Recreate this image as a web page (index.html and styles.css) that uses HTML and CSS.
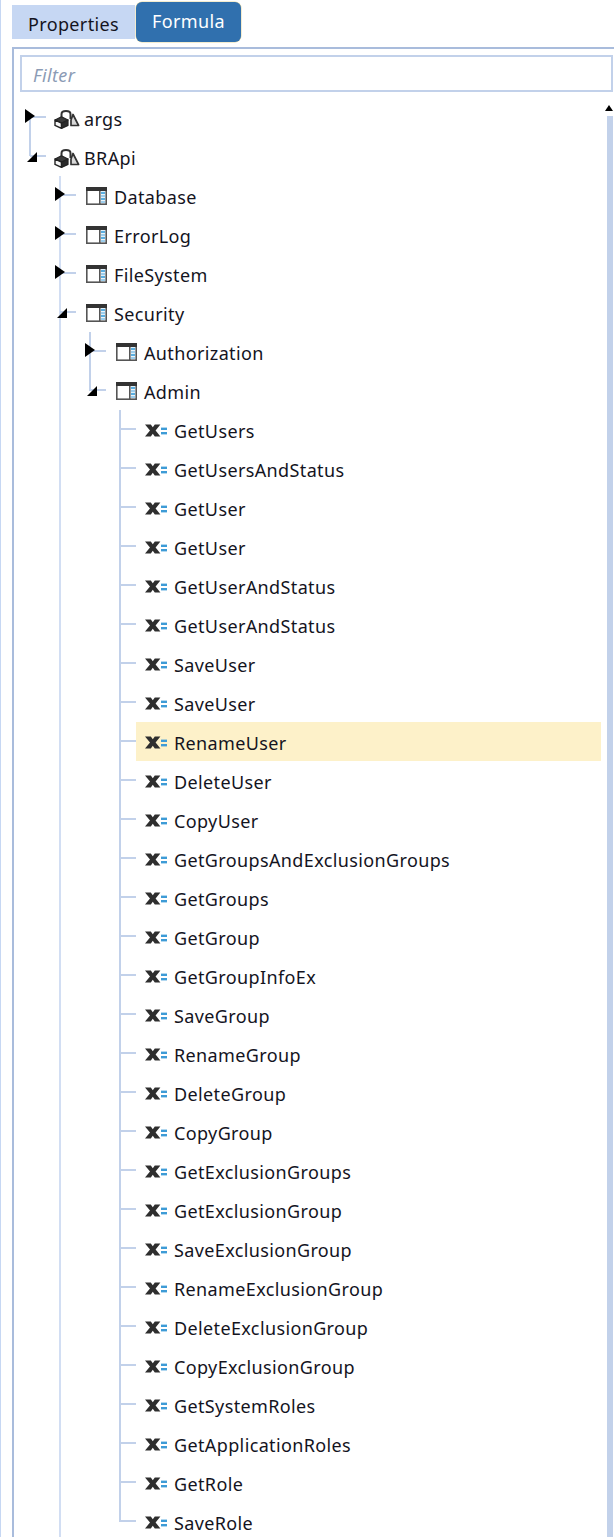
FILE: index.html
```html
<!DOCTYPE html>
<html lang="en">
<head>
<meta charset="utf-8">
<title>Formula</title>
<link rel="stylesheet" href="styles.css">
</head>
<body>
<svg class="defs" width="0" height="0" aria-hidden="true">
  <symbol id="ns" viewBox="0 0 26 19">
    <path d="M7.5 8V4.2C7.5 1.9 9.6 1 12 1S16.5 1.9 16.5 4.2V9" fill="none" stroke="#333" stroke-width="2"/>
    <path d="M19 4.5L24.6 15.5H17V10Z" fill="#d8d8d8" stroke="#333" stroke-width="1.7" stroke-linejoin="round"/>
    <path d="M1 10L7.5 6.8L14 10L7.5 13.2Z" fill="#3a3a3a" stroke="#222" stroke-width="1.2" stroke-linejoin="round"/>
    <path d="M1 10V15.4L7.5 18.4V13.2Z" fill="#f6f6f6" stroke="#222" stroke-width="1.4" stroke-linejoin="round"/>
    <path d="M14 10V15.4L7.5 18.4V13.2Z" fill="#2a2a2a" stroke="#222" stroke-width="1.2" stroke-linejoin="round"/>
  </symbol>
  <symbol id="cls" viewBox="0 0 21 18">
    <rect x="0.8" y="0.8" width="19.4" height="16.4" fill="#fff" stroke="#555" stroke-width="1.6"/>
    <rect x="0" y="0" width="21" height="4" fill="#333"/>
    <rect x="13" y="4" width="1.6" height="13" fill="#555"/>
    <rect x="15" y="4.8" width="4" height="2.2" fill="#5aaee0"/>
    <rect x="15" y="7.8" width="4" height="2.2" fill="#9ccdec"/>
    <rect x="15" y="10.8" width="4" height="2.2" fill="#5aaee0"/>
    <rect x="15" y="13.8" width="4" height="2.2" fill="#9ccdec"/>
  </symbol>
  <symbol id="fn" viewBox="0 0 22 13">
    <path d="M0 0.5H5.8L7.8 3.2L9.8 0.5H15.4L10.6 6.5L15.4 12.5H9.8L7.8 9.8L5.8 12.5H0L5 6.5Z" fill="#2e2e2e"/>
    <rect x="16" y="3.6" width="6" height="2.4" fill="#3d9bd6"/>
    <rect x="16" y="8" width="6" height="2.4" fill="#3d9bd6"/>
  </symbol>
</svg>
<div class="app">
  <div class="tabs">
    <div class="tab">Properties</div>
    <div class="tab tab-active">Formula</div>
  </div>
  <div class="panel">
    <div class="filter">Filter</div>
    <div class="body">
      <div class="tree">
        <ul class="nodes root">
          <li class="node"><div class="row"><span class="twisty closed"></span><span class="item"><svg class="ico ico-ns"><use href="#ns"/></svg>args</span></div></li>
          <li class="node"><div class="row"><span class="twisty open"></span><span class="item"><svg class="ico ico-ns"><use href="#ns"/></svg>BRApi</span></div>
            <ul class="nodes api">
              <li class="node"><div class="row"><span class="twisty closed"></span><span class="item"><svg class="ico ico-cls"><use href="#cls"/></svg>Database</span></div></li>
              <li class="node"><div class="row"><span class="twisty closed"></span><span class="item"><svg class="ico ico-cls"><use href="#cls"/></svg>ErrorLog</span></div></li>
              <li class="node"><div class="row"><span class="twisty closed"></span><span class="item"><svg class="ico ico-cls"><use href="#cls"/></svg>FileSystem</span></div></li>
              <li class="node"><div class="row"><span class="twisty open"></span><span class="item"><svg class="ico ico-cls"><use href="#cls"/></svg>Security</span></div>
                <ul class="nodes sec">
                  <li class="node"><div class="row"><span class="twisty closed"></span><span class="item"><svg class="ico ico-cls"><use href="#cls"/></svg>Authorization</span></div></li>
                  <li class="node"><div class="row"><span class="twisty open"></span><span class="item"><svg class="ico ico-cls"><use href="#cls"/></svg>Admin</span></div>
                    <ul class="nodes admin">
                      <li class="node"><div class="row"><span class="leaf"></span><span class="item"><svg class="ico ico-fn"><use href="#fn"/></svg>GetUsers</span></div></li>
                      <li class="node"><div class="row"><span class="leaf"></span><span class="item"><svg class="ico ico-fn"><use href="#fn"/></svg>GetUsersAndStatus</span></div></li>
                      <li class="node"><div class="row"><span class="leaf"></span><span class="item"><svg class="ico ico-fn"><use href="#fn"/></svg>GetUser</span></div></li>
                      <li class="node"><div class="row"><span class="leaf"></span><span class="item"><svg class="ico ico-fn"><use href="#fn"/></svg>GetUser</span></div></li>
                      <li class="node"><div class="row"><span class="leaf"></span><span class="item"><svg class="ico ico-fn"><use href="#fn"/></svg>GetUserAndStatus</span></div></li>
                      <li class="node"><div class="row"><span class="leaf"></span><span class="item"><svg class="ico ico-fn"><use href="#fn"/></svg>GetUserAndStatus</span></div></li>
                      <li class="node"><div class="row"><span class="leaf"></span><span class="item"><svg class="ico ico-fn"><use href="#fn"/></svg>SaveUser</span></div></li>
                      <li class="node"><div class="row"><span class="leaf"></span><span class="item"><svg class="ico ico-fn"><use href="#fn"/></svg>SaveUser</span></div></li>
                      <li class="node"><div class="row"><span class="leaf"></span><span class="item selected"><svg class="ico ico-fn"><use href="#fn"/></svg>RenameUser</span></div></li>
                      <li class="node"><div class="row"><span class="leaf"></span><span class="item"><svg class="ico ico-fn"><use href="#fn"/></svg>DeleteUser</span></div></li>
                      <li class="node"><div class="row"><span class="leaf"></span><span class="item"><svg class="ico ico-fn"><use href="#fn"/></svg>CopyUser</span></div></li>
                      <li class="node"><div class="row"><span class="leaf"></span><span class="item"><svg class="ico ico-fn"><use href="#fn"/></svg>GetGroupsAndExclusionGroups</span></div></li>
                      <li class="node"><div class="row"><span class="leaf"></span><span class="item"><svg class="ico ico-fn"><use href="#fn"/></svg>GetGroups</span></div></li>
                      <li class="node"><div class="row"><span class="leaf"></span><span class="item"><svg class="ico ico-fn"><use href="#fn"/></svg>GetGroup</span></div></li>
                      <li class="node"><div class="row"><span class="leaf"></span><span class="item"><svg class="ico ico-fn"><use href="#fn"/></svg>GetGroupInfoEx</span></div></li>
                      <li class="node"><div class="row"><span class="leaf"></span><span class="item"><svg class="ico ico-fn"><use href="#fn"/></svg>SaveGroup</span></div></li>
                      <li class="node"><div class="row"><span class="leaf"></span><span class="item"><svg class="ico ico-fn"><use href="#fn"/></svg>RenameGroup</span></div></li>
                      <li class="node"><div class="row"><span class="leaf"></span><span class="item"><svg class="ico ico-fn"><use href="#fn"/></svg>DeleteGroup</span></div></li>
                      <li class="node"><div class="row"><span class="leaf"></span><span class="item"><svg class="ico ico-fn"><use href="#fn"/></svg>CopyGroup</span></div></li>
                      <li class="node"><div class="row"><span class="leaf"></span><span class="item"><svg class="ico ico-fn"><use href="#fn"/></svg>GetExclusionGroups</span></div></li>
                      <li class="node"><div class="row"><span class="leaf"></span><span class="item"><svg class="ico ico-fn"><use href="#fn"/></svg>GetExclusionGroup</span></div></li>
                      <li class="node"><div class="row"><span class="leaf"></span><span class="item"><svg class="ico ico-fn"><use href="#fn"/></svg>SaveExclusionGroup</span></div></li>
                      <li class="node"><div class="row"><span class="leaf"></span><span class="item"><svg class="ico ico-fn"><use href="#fn"/></svg>RenameExclusionGroup</span></div></li>
                      <li class="node"><div class="row"><span class="leaf"></span><span class="item"><svg class="ico ico-fn"><use href="#fn"/></svg>DeleteExclusionGroup</span></div></li>
                      <li class="node"><div class="row"><span class="leaf"></span><span class="item"><svg class="ico ico-fn"><use href="#fn"/></svg>CopyExclusionGroup</span></div></li>
                      <li class="node"><div class="row"><span class="leaf"></span><span class="item"><svg class="ico ico-fn"><use href="#fn"/></svg>GetSystemRoles</span></div></li>
                      <li class="node"><div class="row"><span class="leaf"></span><span class="item"><svg class="ico ico-fn"><use href="#fn"/></svg>GetApplicationRoles</span></div></li>
                      <li class="node"><div class="row"><span class="leaf"></span><span class="item"><svg class="ico ico-fn"><use href="#fn"/></svg>GetRole</span></div></li>
                      <li class="node"><div class="row"><span class="leaf"></span><span class="item"><svg class="ico ico-fn"><use href="#fn"/></svg>SaveRole</span></div></li>
                    </ul>
                  </li>
                </ul>
              </li>
            </ul>
          </li>
        </ul>
      </div>
      <div class="scrollbar"><span class="arrow"></span><span class="thumb"></span></div>
    </div>
  </div>
</div>
</body>
</html>
```
FILE: styles.css
```css
html, body { margin: 0; padding: 0; height: 100%; overflow: hidden; background: #fff; }
body { font-family: "Noto Sans", "Open Sans", sans-serif; font-size: 18px; letter-spacing: 0.37px; color: #14141e; }
.defs { position: absolute; }
.app { height: 1537px; overflow: hidden; box-sizing: border-box; border-left: 1px solid #c6d7f3; padding: 2px 0 0 11px; }
.tabs { display: flex; align-items: center; height: 40px; gap: 1px; }
.tab { width: 123px; height: 34px; padding-top: 3px; box-sizing: border-box; background: #c6d7f3; display: flex; align-items: center; justify-content: center; }
.tab-active { width: 105px; height: 40px; background: #3070ae; color: #fff; border-radius: 6px; box-shadow: 0 0 0 0.5px #e8d9a0; padding: 0 0 3px; }
.panel { margin-top: 5px; border-left: 2px solid #a9bcdc; border-top: 2px solid #a9bcdc; padding: 6px 0 0 6px; }
.filter { height: 31px; margin-right: 1px; border: 2px solid #c2d1ea; padding: 2px 0 0 11px; display: flex; align-items: center; font-style: italic; color: #8b9bb5; background: #fff; }
.body { display: flex; margin-left: -4px; margin-top: 6px; }
.tree { flex: 1; min-width: 0; padding-right: 4px; }
.nodes { list-style: none; margin: 0; padding: 0; position: relative; }
.nodes .nodes { margin-left: 30px; }
.nodes::before { content: ""; position: absolute; left: 13px; width: 2px; background: #c2d1ea; }
.root::before { top: 20px; height: 38px; }
.api::before { top: 0; bottom: 0; background: #d2def3; }
.sec::before { top: 0; height: 59px; }
.admin::before { top: 0; bottom: 19px; }
.row { display: flex; align-items: stretch; height: 39px; position: relative; }
.row::before { content: ""; position: absolute; left: 14px; top: 18px; width: 16px; height: 2px; background: #c2d1ea; }
.twisty, .leaf { width: 30px; flex: none; position: relative; z-index: 1; }
.twisty::before { content: ""; position: absolute; }
.closed::before { left: 9px; top: 11px; border-left: 10px solid #000; border-top: 7.5px solid transparent; border-bottom: 7.5px solid transparent; }
.open::before { left: 11px; top: 15px; border-right: 10px solid #000; border-top: 10px solid transparent; }
.item { flex: 1; display: flex; align-items: center; padding-top: 2px; box-sizing: border-box; white-space: nowrap; position: relative; z-index: 1; }
.selected { background: #fdf1c9; }
.ico { flex: none; display: block; }
.ico-ns { width: 26px; height: 19px; margin: 1px 4px 0 8px; }
.ico-cls { width: 21px; height: 18px; margin: -1px 7px 0 10px; }
.ico-fn { width: 22px; height: 13px; margin: 0 7px 0 9px; }
.scrollbar { width: 9px; flex: none; display: flex; flex-direction: column; align-items: flex-start; }
.arrow { width: 0; height: 0; border-left: 4.5px solid transparent; border-right: 4.5px solid transparent; border-bottom: 6px solid #000; margin-top: 7px; }
.thumb { width: 6px; height: 1500px; margin: 5px 0 0 2px; background: #c2d1ea; }
```
